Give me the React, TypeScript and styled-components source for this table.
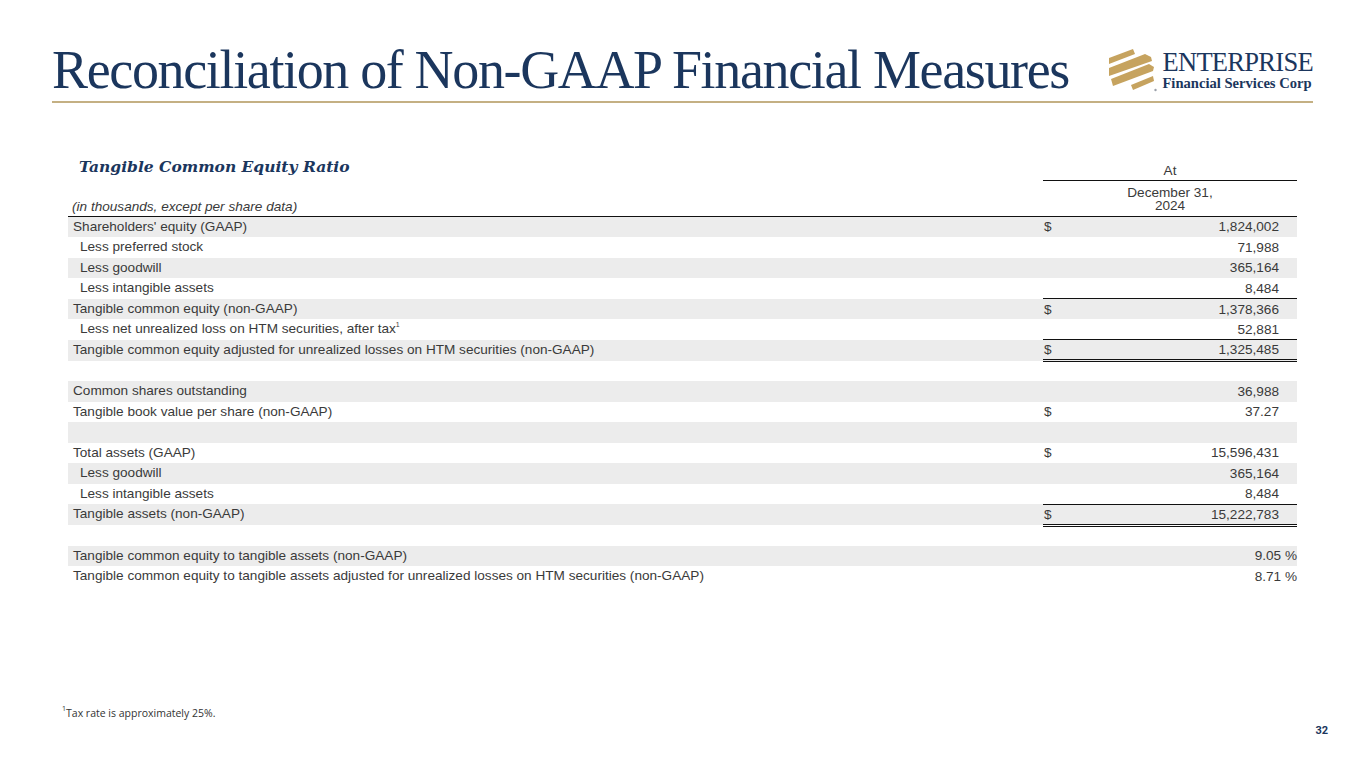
import React from "react";
import styled, { createGlobalStyle } from "styled-components";

const Global = createGlobalStyle`
  html, body { margin: 0; padding: 0; background: #fff; }
  body { font-family: "Liberation Sans", Arial, sans-serif; }
`;

const NAVY = "#1b365d";
const GOLD = "#c4b083";
const TEXT = "#3a3a3a";
const STRIPE = "#ececec";

const Page = styled.div`
  width: 1365px;
  height: 768px;
  display: flex;
  flex-direction: column;
  overflow: hidden;
  position: relative;
`;

const Header = styled.header`
  margin: 0 52px;
  height: 103px;
  display: flex;
  align-items: flex-end;
  justify-content: space-between;
  border-bottom: 2px solid ${GOLD};
  box-sizing: border-box;
`;

const Title = styled.h1`
  margin: 0 0 4px 0;
  font-family: "Liberation Serif", "Times New Roman", serif;
  font-weight: 400;
  font-size: 54px;
  letter-spacing: -1.35px;
  line-height: 1;
  color: ${NAVY};
  white-space: nowrap;
`;

const Logo = styled.div`
  display: flex;
  align-items: center;
  gap: 3px;
  margin-bottom: 8px;
`;

const LogoText = styled.div`
  display: flex;
  flex-direction: column;
  font-family: "Liberation Serif", "Times New Roman", serif;
  color: ${NAVY};
  line-height: 1;
`;

const LogoName = styled.span`
  font-size: 26.5px;
  letter-spacing: -0.7px;
`;

const LogoSub = styled.span`
  font-size: 14.6px;
  font-weight: 700;
  margin-top: 1px;
`;

const Main = styled.main`
  flex: 1;
  padding: 54px 68px 0 68px;
`;

const Table = styled.table`
  width: 100%;
  border-collapse: collapse;
  table-layout: fixed;
  font-family: "Liberation Sans", Arial, sans-serif;
  font-size: 13.6px;
  color: ${TEXT};
`;

const SectionTitle = styled.th`
  text-align: left;
  padding: 0 0 4px 11px;
  font-family: "DejaVu Serif", "Liberation Serif", serif;
  font-style: italic;
  font-weight: 700;
  font-size: 15.5px;
  color: ${NAVY};
  vertical-align: bottom;
`;

const HeadCell = styled.th<{ $line?: boolean }>`
  font-weight: 400;
  text-align: center;
  vertical-align: bottom;
  padding: ${(p) => (p.$line ? "0 0 3px 0" : "5px 0 4px 0")};
  line-height: 13px;
  border-bottom: ${(p) => (p.$line ? "1.5px solid #111" : "none")};
`;

const UnitsCell = styled.th`
  text-align: left;
  font-weight: 400;
  font-style: italic;
  vertical-align: bottom;
  padding: 0 0 3px 4px;
  line-height: 13px;
`;

const HeaderRow2 = styled.tr`
  border-bottom: 1.5px solid #111;
`;

const Row = styled.tr<{ $shade: boolean }>`
  height: 20.5px;
  background: ${(p) => (p.$shade ? STRIPE : "#fff")};
`;

const Label = styled.td<{ $indent: boolean }>`
  padding: 0 0 0 ${(p) => (p.$indent ? 12 : 5)}px;
  white-space: nowrap;
  line-height: 20.5px;
`;

const ValueCell = styled.td<{ $top?: boolean; $double?: boolean }>`
  padding: 0;
  line-height: 19px;
  border-top: ${(p) => (p.$top ? "1.5px solid #111" : "none")};
  border-bottom: ${(p) => (p.$double ? "3.5px double #111" : "none")};
`;

const ValueInner = styled.div`
  display: flex;
  align-items: center;
  justify-content: space-between;
  padding-left: 1px;
`;

const Dollar = styled.span``;

const Num = styled.span<{ $pct: boolean }>`
  padding-right: ${(p) => (p.$pct ? 0 : 18)}px;
  white-space: pre;
`;

const Sup = styled.sup`
  font-size: 7px;
  vertical-align: 6px;
  line-height: 0;
`;

const Footer = styled.footer`
  padding: 0 0 0 62px;
  height: 62px;
  display: flex;
  flex-direction: column;
`;

const Footnote = styled.div`
  font-family: "Open Sans", "Liberation Sans", sans-serif;
  font-size: 10.5px;
  color: #333;
`;

const PageNum = styled.div`
  position: absolute;
  right: 37px;
  bottom: 31px;
  font-family: "Roboto", "Liberation Sans", sans-serif;
  font-weight: 700;
  font-size: 11px;
  color: ${NAVY};
`;

type R = {
  label?: string;
  indent?: boolean;
  dollar?: boolean;
  value?: string;
  top?: boolean;
  double?: boolean;
  sup?: boolean;
  pct?: boolean;
};

const rows: R[] = [
  { label: "Shareholders' equity (GAAP)", dollar: true, value: "1,824,002" },
  { label: "Less preferred stock", indent: true, value: "71,988" },
  { label: "Less goodwill", indent: true, value: "365,164" },
  { label: "Less intangible assets", indent: true, value: "8,484" },
  { label: "Tangible common equity (non-GAAP)", dollar: true, value: "1,378,366", top: true },
  { label: "Less net unrealized loss on HTM securities, after tax", indent: true, value: "52,881", sup: true },
  {
    label: "Tangible common equity adjusted for unrealized losses on HTM securities (non-GAAP)",
    dollar: true,
    value: "1,325,485",
    top: true,
    double: true,
  },
  {},
  { label: "Common shares outstanding", value: "36,988" },
  { label: "Tangible book value per share (non-GAAP)", dollar: true, value: "37.27" },
  {},
  { label: "Total assets (GAAP)", dollar: true, value: "15,596,431" },
  { label: "Less goodwill", indent: true, value: "365,164" },
  { label: "Less intangible assets", indent: true, value: "8,484" },
  { label: "Tangible assets (non-GAAP)", dollar: true, value: "15,222,783", top: true, double: true },
  {},
  { label: "Tangible common equity to tangible assets (non-GAAP)", value: "9.05 %", pct: true },
  {
    label: "Tangible common equity to tangible assets adjusted for unrealized losses on HTM securities (non-GAAP)",
    value: "8.71 %",
    pct: true,
  },
];

const LogoMark = () => (
  <svg width="52" height="46" viewBox="0 0 52 46">
    <g fill="#c6a35f">
      <polygon points="2,11 26,2 28,7 2,17" />
      <polygon points="2,21 38,7 44,10 45,14 2,29" />
      <polygon points="4,32 42,17 47,20 46,24 6,39" />
      <polygon points="24,38 46,29 47,34 26,43" />
    </g>
    <circle cx="48.5" cy="43" r="1.2" fill="#9aa0aa" />
  </svg>
);

export default function App() {
  let shade = true;
  return (
    <Page>
      <Global />
      <Header>
        <Title>Reconciliation of Non-GAAP Financial Measures</Title>
        <Logo>
          <LogoMark />
          <LogoText>
            <LogoName>ENTERPRISE</LogoName>
            <LogoSub>Financial Services Corp</LogoSub>
          </LogoText>
        </Logo>
      </Header>
      <Main>
        <Table>
          <colgroup>
            <col />
            <col style={{ width: 254 }} />
          </colgroup>
          <thead>
            <tr>
              <SectionTitle>Tangible Common Equity Ratio</SectionTitle>
              <HeadCell $line>At</HeadCell>
            </tr>
            <HeaderRow2>
              <UnitsCell>(in thousands, except per share data)</UnitsCell>
              <HeadCell>
                December 31,
                <br />
                2024
              </HeadCell>
            </HeaderRow2>
          </thead>
          <tbody>
            {rows.map((r, i) => {
              const s = shade;
              shade = !shade;
              return (
                <Row key={i} $shade={s}>
                  <Label $indent={!!r.indent}>
                    {r.label}
                    {r.sup && <Sup>1</Sup>}
                  </Label>
                  <ValueCell $top={r.top} $double={r.double}>
                    <ValueInner>
                      <Dollar>{r.dollar ? "$" : ""}</Dollar>
                      <Num $pct={!!r.pct}>{r.value ?? ""}</Num>
                    </ValueInner>
                  </ValueCell>
                </Row>
              );
            })}
          </tbody>
        </Table>
      </Main>
      <Footer>
        <Footnote>
          <Sup>1</Sup>Tax rate is approximately 25%.
        </Footnote>
      </Footer>
      <PageNum>32</PageNum>
    </Page>
  );
}
